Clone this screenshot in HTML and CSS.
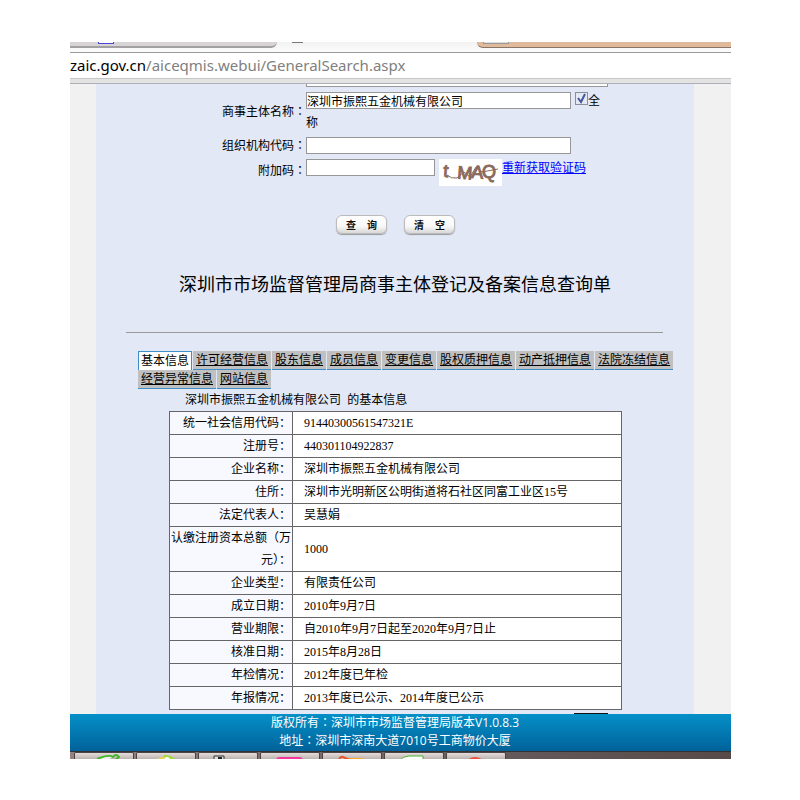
FILE: index.html
```
<!DOCTYPE html>
<html lang="zh-CN">
<head>
<meta charset="UTF-8">
<meta name="viewport" content="width=device-width, initial-scale=1.0">
<title>深圳市市场监督管理局</title>
<link rel="stylesheet" href="styles.css">
</head>
<body>

<div class="window">
    <div class="tabstrip">
        <div class="browser-tab"><span class="tab-icon blue"></span></div>
        <span class="new-tab"></span>
        <div class="browser-tab active"><span class="tab-icon"></span></div>
    </div>
    <div class="address"><span class="host">zaic.gov.cn</span>/aiceqmis.webui/GeneralSearch.aspx</div>
    <div class="toolbar"></div>

    <div class="page">
        <main class="content">
            <form id="searchForm" class="search">
                <input type="text" class="box top" aria-label="注册号">

                <label for="entName" class="name-label">商事主体名称<span class="colon" lang="zh-TW">：</span></label>
                <div class="field">
                    <input type="text" id="entName" class="box wide" value="深圳市振熙五金机械有限公司">
                    <label class="full"><input type="checkbox" checked>全</label>
                    <div class="rest">称</div>
                </div>

                <label for="orgCode">组织机构代码<span class="colon" lang="zh-TW">：</span></label>
                <div class="field"><input type="text" id="orgCode" class="box wide"></div>

                <label for="captcha" class="code-label">附加码<span class="colon" lang="zh-TW">：</span></label>
                <div class="field code">
                    <input type="text" id="captcha" class="box short">
                    <svg class="captcha" width="63" height="27" viewBox="0 0 63 27">
                        <rect width="63" height="27" fill="#fff"/>
                        <g fill="#8b6a5c" stroke="#8b6a5c" font-family="Liberation Sans" font-size="18">
                            <text x="4" y="18" transform="rotate(4 6 18)">t</text>
                            <text x="18" y="20" transform="rotate(4 25 18)">M</text>
                            <text x="32" y="19" transform="rotate(5 36 18)">A</text>
                            <text x="43" y="19">Q</text>
                        </g>
                        <path d="M8 16q4 4 10 3l7-6 6 5 6-10 6 5 16-3" fill="none" stroke="#8b6a5c" stroke-width="1"/>
                    </svg>
                    <a href="#">重新获取验证码</a>
                </div>

                <div class="buttons">
                    <button type="submit">查<span></span>询</button>
                    <button type="reset">清<span></span>空</button>
                </div>
            </form>

            <h1>深圳市市场监督管理局商事主体登记及备案信息查询单</h1>
            <hr>

            <nav class="tabs">
                <a href="#" class="current">基本信息</a>
                <a href="#">许可经营信息</a>
                <a href="#">股东信息</a>
                <a href="#">成员信息</a>
                <a href="#">变更信息</a>
                <a href="#">股权质押信息</a>
                <a href="#">动产抵押信息</a>
                <a href="#">法院冻结信息</a>
                <a href="#">经营异常信息</a>
                <a href="#">网站信息</a>
            </nav>

            <p class="caption">深圳市振熙五金机械有限公司&nbsp; 的基本信息</p>
            <table class="info">
                <tr><th>统一社会信用代码：</th><td>91440300561547321E</td></tr>
                <tr><th>注册号：</th><td>440301104922837</td></tr>
                <tr><th>企业名称：</th><td>深圳市振熙五金机械有限公司</td></tr>
                <tr><th>住所：</th><td>深圳市光明新区公明街道将石社区同富工业区15号</td></tr>
                <tr><th>法定代表人：</th><td>吴慧娟</td></tr>
                <tr><th>认缴注册资本总额（万元）：</th><td>1000</td></tr>
                <tr><th>企业类型：</th><td>有限责任公司</td></tr>
                <tr><th>成立日期：</th><td>2010年9月7日</td></tr>
                <tr><th>营业期限：</th><td>自2010年9月7日起至2020年9月7日止</td></tr>
                <tr><th>核准日期：</th><td>2015年8月28日</td></tr>
                <tr><th>年检情况：</th><td>2012年度已年检</td></tr>
                <tr><th>年报情况：</th><td>2013年度已公示、2014年度已公示</td></tr>
            </table>
            <div class="mark"></div>
        </main>
    </div>

    <footer class="footer">
        <p>版权所有<span class="colon" lang="zh-TW">：</span>深圳市市场监督管理局版本V1.0.8.3</p>
        <p>地址<span class="colon" lang="zh-TW">：</span>深圳市深南大道7010号工商物价大厦</p>
    </footer>

    <div class="taskbar">
        <div class="task"><svg width="60" height="7"><path d="M20 7q8-6 18-3l-6 3z" fill="#eef5ea"/><path d="M22 6q12-5 16-2 3-4 6 0l-4 3" fill="none" stroke="#45b52c" stroke-width="2"/></svg></div>
        <div class="task"><svg width="60" height="7"><path d="M19 7q3-3 8-3v3z" fill="#f3d34a"/><path d="M27 7V2q8 0 12 5z" fill="#a5d83a"/><circle cx="30" cy="7" r="3" fill="#fff"/></svg></div>
        <div class="task"><svg width="60" height="7"><path d="M15 7V3h10v4" fill="#ddd" stroke="#333"/><path d="M19 4h4v3h-4z" fill="#222"/></svg></div>
        <div class="task"><svg width="60" height="7"><path d="M15 7q0-3 4-3h19q4 0 4 3z" fill="#f7359b"/></svg></div>
        <div class="task"><svg width="60" height="7"><path d="M22 5h19v2H22z" fill="#f6a735"/><path d="M16 6q3-4 6-1l5 2" fill="none" stroke="#e5532f" stroke-width="2"/></svg></div>
        <div class="task"><svg width="60" height="7"><path d="M14 8q4-5 10-5h14v5z" fill="#fff" stroke="#45b52c"/></svg></div>
        <div class="task"><svg width="60" height="7"><path d="M20 7q8-6 16 0z" fill="#ec503c"/></svg></div>
    </div>
</div>

<script>
// Keep the form on the page
document.getElementById('searchForm').addEventListener('submit', function(event) {
    event.preventDefault();
});
</script>

</body>
</html>
```
FILE: styles.css
```
body {
    font-family: "Open Sans", "Noto Sans CJK SC", sans-serif;
    font-size: 12px;
    margin: 0;
    padding: 42px 69px 41px 70px;
    background-color: #fff;
    color: #000;
}
.window {
    overflow: hidden;
}
.colon {
    font-family: "Noto Sans CJK TC", sans-serif;
    line-height: 1;
}

/* browser chrome */
.tabstrip {
    display: flex;
    align-items: flex-start;
    height: 10px;
    background: linear-gradient(#f2f2f2, #fcfcfc);
    border-bottom: 1px solid #9a9a9a;
}
.browser-tab {
    box-sizing: border-box;
    height: 6px;
    width: 207px;
    padding-left: 28px;
    background-color: #d8d4d6;
    border-bottom: 2px solid #a3a0a4;
    border-radius: 0 0 7px 0;
}
.browser-tab.active {
    flex: 1;
    margin-left: 174px;
    padding-left: 6px;
    background-color: #dfbb9c;
    border-bottom: 1px solid #8b7468;
    border-radius: 0 0 0 6px;
}
.tab-icon {
    display: block;
    box-sizing: border-box;
    width: 26px;
    height: 2px;
    background-color: #ddd;
    border: 1px solid #999;
    border-top: none;
}
.tab-icon.blue {
    width: 16px;
    background-color: #fff;
    border-color: #4848d8;
}
.new-tab {
    width: 11px;
    height: 1px;
    margin-left: 15px;
    background-color: #777;
}
.address {
    height: 25px;
    line-height: 25px;
    font-family: "Noto Sans", sans-serif;
    font-size: 15px;
    color: #808080;
    white-space: nowrap;
    background-color: #fff;
}
.host {
    color: #000;
}
.toolbar {
    height: 4px;
    background-color: #e3e3e3;
    border-top: 1px solid #c4c7c4;
    border-bottom: 1px solid #adb0b6;
}

/* page */
.page {
    padding: 0 37px 0 26px;
    background-color: #f1f1f1;
}
.content {
    background-color: #e2e8f6;
}
.search {
    display: grid;
    grid-template-columns: 210px 1fr;
    text-align: right;
    line-height: 18px;
}
.box {
    box-sizing: border-box;
    height: 17px;
    margin: 0;
    padding: 0;
    border: 1px solid #979797;
    background-color: #fff;
    font-family: "Liberation Serif", "Noto Sans CJK SC", sans-serif;
    font-size: 12px;
}
.box.top {
    grid-column: 2;
    width: 302px;
    height: 3px;
    margin-bottom: 5px;
    border-top: none;
}
.wide {
    width: 265px;
}
.short {
    width: 129px;
}
.name-label {
    padding-top: 11px;
}
.field {
    display: flex;
    flex-wrap: wrap;
    align-items: flex-start;
    text-align: left;
}
.full {
    display: flex;
    align-items: flex-start;
    margin-left: 4px;
}
.full input {
    width: 13px;
    height: 13px;
    margin: 0;
    appearance: none;
    border: 1px solid #8a8f99;
    background-color: #e4e9f3;
}
.full input:checked {
    background-image: url("data:image/svg+xml,%3Csvg xmlns='http://www.w3.org/2000/svg' viewBox='0 0 11 11'%3E%3Cpath d='M2 5l3 4 4-8' fill='none' stroke='%2342589c' stroke-width='2'/%3E%3C/svg%3E");
}
.rest {
    width: 100%;
    padding-top: 4px;
    padding-bottom: 5px;
}
.code {
    padding-top: 4px;
}
.code-label {
    padding-top: 7px;
}
.captcha {
    margin-left: 4px;
}
.field a {
    color: #0000ff;
}
.buttons {
    grid-column: 1 / 3;
    display: flex;
    gap: 17px;
    padding-top: 29px;
    padding-left: 240px;
}
button {
    display: flex;
    justify-content: space-between;
    align-items: center;
    width: 51px;
    height: 19px;
    padding: 0 9px;
    border: 1px solid #bbb;
    border-radius: 6px;
    background: linear-gradient(#fff, #f8f8f8 60%, #d8d8d8);
    box-shadow: 0 1px 1px #999;
    color: #111;
    font-family: "Noto Sans CJK SC", sans-serif;
    font-size: 10px;
    font-weight: bold;
    cursor: pointer;
}
h1 {
    margin: 37px 0 0;
    text-align: center;
    font-size: 18px;
    font-weight: normal;
    line-height: 26px;
}
hr {
    margin: 35px 31px 0 30px;
    border: none;
    border-top: 1px solid #999;
}
.tabs {
    display: flex;
    flex-wrap: wrap;
    column-gap: 1px;
    padding: 18px 15px 0 42px;
}
.tabs a {
    box-sizing: border-box;
    height: 19px;
    padding: 0 3px;
    line-height: 18px;
    color: #000;
    background-color: #c0c0c0;
    border-bottom: 1px solid #3d8fcb;
}
.tabs .current {
    padding: 0 2px;
    line-height: 17px;
    text-decoration: none;
    background-color: #fff;
    border: 1px solid #3d8fcb;
    border-bottom: none;
}
.caption {
    margin: 0;
    padding: 2px 0 2px 89px;
    line-height: 18px;
}
.info {
    width: 453px;
    margin-left: 73px;
    border-collapse: collapse;
    font-family: "Liberation Serif", "Noto Sans CJK SC", sans-serif;
    line-height: 22px;
}
.info th, .info td {
    padding: 0;
    border: 1px solid #666;
    background-color: #fff;
}
.info th {
    width: 121px;
    padding-right: 1px;
    text-align: right;
    font-weight: normal;
    background-color: #f8f9ff;
}
.info td {
    padding-left: 11px;
}
.mark {
    width: 34px;
    height: 1px;
    margin: 3px 0 0 478px;
    background-color: #111;
}

/* footer and taskbar */
.footer {
    padding: 0 37px 1px 26px;
    background: linear-gradient(#0590c8, #01629a);
    color: #fff;
    text-align: center;
    line-height: 18px;
}
.footer p {
    margin: 0;
}
.taskbar {
    display: flex;
    gap: 2px;
    height: 7px;
    padding-left: 4px;
    border-top: 1px solid #333;
    background: linear-gradient(90deg, #95837f, #655a5a 65%, #574a48);
}
.task {
    box-sizing: border-box;
    width: 60px;
    height: 7px;
    overflow: hidden;
    border: 1px solid #4c4444;
    border-bottom: none;
    border-radius: 2px 2px 0 0;
    background: linear-gradient(#e4dddb, #bdb3b1);
}
.task svg {
    display: block;
}
```
